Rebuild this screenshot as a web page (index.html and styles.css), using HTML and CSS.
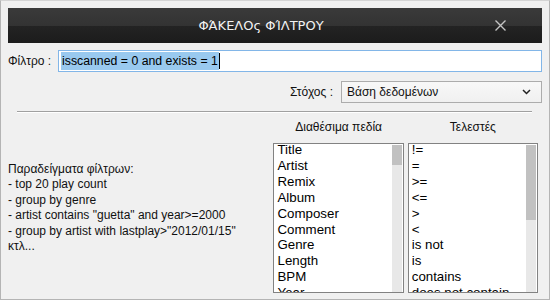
FILE: index.html
```html
<!DOCTYPE html>
<html>
<head>
<meta charset="utf-8">
<link rel="stylesheet" href="styles.css">
</head>
<body>
<div class="window">
  <div class="titlebar">
    <span class="title">ΦΆΚΕΛΟς ΦΊΛΤΡΟΥ</span>
    <svg class="close" width="11" height="11" viewBox="0 0 11 11"><path d="M0.5 0.5 L10.5 10.5 M10.5 0.5 L0.5 10.5" stroke="#c4c4c4" stroke-width="1.4" fill="none"/></svg>
  </div>
  <div class="content">
    <div class="row filter-row">
      <label class="lbl">Φίλτρο :</label>
      <div class="input"><span class="sel">isscanned = 0 and exists = 1</span><span class="caret"></span></div>
    </div>
    <div class="row target-row">
      <label class="lbl">Στόχος :</label>
      <div class="select">
        <span>Βάση δεδομένων</span>
        <svg class="chev" width="9" height="6" viewBox="0 0 9 6"><path d="M1 1 L4.5 4.5 L8 1" fill="none" stroke="#222" stroke-width="1.5"/></svg>
      </div>
    </div>
    <div class="sep"></div>
    <div class="bottom">
      <div class="examples">
        <div>Παραδείγματα φίλτρων:</div>
        <div>- top 20 play count</div>
        <div>- group by genre</div>
        <div>- artist contains "guetta" and year&gt;=2000</div>
        <div>- group by artist with lastplay&gt;"2012/01/15"</div>
        <div>κτλ...</div>
      </div>
      <div class="col">
        <div class="col-head">Διαθέσιμα πεδία</div>
        <div class="list">
          <div class="items">
            <div>Title</div><div>Artist</div><div>Remix</div><div>Album</div><div>Composer</div><div>Comment</div><div>Genre</div><div>Length</div><div>BPM</div><div>Year</div>
          </div>
          <div class="scroll"><div class="thumb thumb1"></div></div>
        </div>
      </div>
      <div class="col">
        <div class="col-head">Τελεστές</div>
        <div class="list">
          <div class="items">
            <div>!=</div><div>=</div><div>&gt;=</div><div>&lt;=</div><div>&gt;</div><div>&lt;</div><div>is not</div><div>is</div><div>contains</div><div>does not contain</div>
          </div>
          <div class="scroll"><div class="thumb thumb2"></div></div>
        </div>
      </div>
    </div>
  </div>
</div>
</body>
</html>
```

FILE: styles.css
```css
html, body {
  margin: 0;
  padding: 0;
}
body {
  width: 550px;
  height: 300px;
  overflow: hidden;
  background: #f0f0f0;
  font-family: "Liberation Sans", Arial, sans-serif;
  font-size: 12px;
  color: #000;
}
.window {
  width: 550px;
  height: 300px;
  box-sizing: border-box;
  border: 1px solid #b4b4b4;
  border-top-color: #d4d4d4;
  padding: 7px 7px 0 7px;
  display: flex;
  flex-direction: column;
  overflow: hidden;
}
.titlebar {
  height: 35px;
  flex: none;
  background: linear-gradient(to bottom, #3a3a3a 0%, #333 50%, #232323 52%, #1c1c1c 100%);
  position: relative;
  display: flex;
  align-items: center;
  justify-content: center;
  padding-right: 28px;
}
.title {
  color: #f2f2f2;
  font-family: "DejaVu Sans", sans-serif;
  font-size: 13px;
}
.close {
  position: absolute;
  right: 36px;
  top: 12px;
}
.content {
  flex: 1;
  display: flex;
  flex-direction: column;
}
.row {
  display: flex;
  align-items: center;
}
.filter-row {
  margin-top: 7px;
}
.lbl {
  color: #111;
}
.filter-row .lbl {
  width: 50px;
}
.input {
  width: 484px;
  height: 22px;
  box-sizing: border-box;
  border: 1px solid #82b6e8;
  background: #fff;
  display: flex;
  align-items: center;
  padding-left: 2px;
}
.sel {
  background: #99c9ef;
  line-height: 18px;
  padding: 0 1px;
  font-size: 12.3px;
}
.caret {
  width: 1px;
  height: 16px;
  background: #000;
}
.target-row {
  justify-content: flex-end;
  margin-top: 9px;
}
.target-row .lbl {
  margin-right: 8px;
}
.select {
  width: 201px;
  height: 22px;
  box-sizing: border-box;
  border: 1px solid #acacac;
  background: linear-gradient(#f8f8f8, #f0f0f0);
  display: flex;
  align-items: center;
  justify-content: space-between;
  padding: 0 10px 0 5px;
  color: #111;
}
.sep {
  margin: 8px 10px 0 9px;
  height: 1px;
  background: #a0a0a0;
  border-bottom: 1px solid #fff;
}
.bottom {
  display: flex;
  margin-top: 6px;
  flex: 1;
}
.examples {
  width: 267px;
  padding-top: 43px;
  line-height: 15.4px;
  color: #111;
}
.col {
  width: 131px;
  margin-right: 4px;
  display: flex;
  flex-direction: column;
}
.col-head {
  text-align: center;
  height: 24px;
  line-height: 16px;
  color: #111;
}
.list {
  height: 150px;
  flex: none;
  box-sizing: border-box;
  border: 1px solid #828282;
  background: #fff;
  display: flex;
  overflow: hidden;
}
.items {
  flex: 1;
  padding-left: 3px;
  margin-top: -2px;
  font-size: 13.3px;
  line-height: 15.9px;
  white-space: nowrap;
  overflow: hidden;
}
.scroll {
  width: 10px;
  background: #e8e8e8;
  margin: 1px 1px 0 0;
}
.thumb {
  background: #c1c1c1;
}
.thumb1 {
  height: 20px;
}
.thumb2 {
  height: 75px;
}
```
